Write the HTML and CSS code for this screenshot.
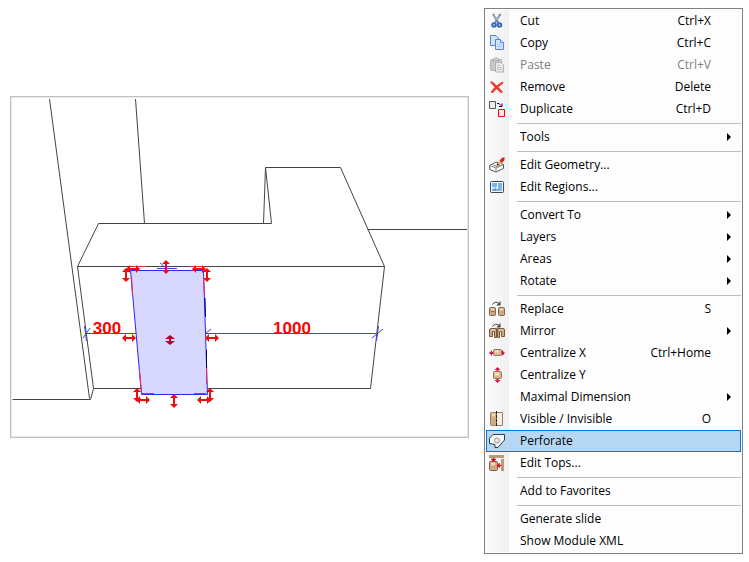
FILE: index.html
```html
<!DOCTYPE html>
<html lang="en">
<head>
    <meta charset="UTF-8">
    <meta name="viewport" content="width=device-width, initial-scale=1.0">
    <title>Module context menu</title>
    <link rel="stylesheet" href="styles.css">
</head>
<body>
    <main class="viewer">
        <svg class="scene" viewBox="11 97 457 340" role="img" aria-label="Module with dimensions">
            <defs>
                <path id="move-x" d="M-7 0L-3 -4V-1H3V-4L7 0L3 4V1H-3V4Z"/>
                <path id="move-y" d="M0 -7L-4 -3H-1V3H-4L0 7L4 3H1V-3H4Z"/>
            </defs>

            <!-- walls and floor -->
            <g class="edges">
                <path d="M49.500 99L89.500 398.500M135.500 99L144.500 223.500M367.500 229.500H467M12.500 399.500H90.500L93.500 388.500L77.500 266.500"/>
                <path d="M77.500 266.500L98.500 223.500H271.500L265.500 167.500H340.500L384.500 266.500H77.500M263.500 223.500L265.500 167.500"/>
                <path d="M93.500 388.500H370.500"/>
                <path d="M384.500 266.500L370.500 388.500"/>
            </g>

            <!-- selected front -->
            <path class="front" d="M130.500 270.500H203.500L207.500 394.500H141.500Z"/>
            <path class="front-shade" d="M205 298L205.500 317M206.500 350V368"/>
            <path class="front-marks" d="M132 266.500H146M189 266.500H204M131.500 276L132.500 296M139.500 371L141.500 392M203.500 278L204.500 296M206.500 368V384M142 393.500H154M194 393.500H206"/>

            <!-- dimensions -->
            <g class="dims">
                <path d="M85 333.500H136M206 333.500H377"/>
                <path d="M84.500 326L86.500 341M83 338L90 328M205 334L211 329M372 338L383 329M378.500 326L376.500 341M157 268.500H177M160 263L166 268"/>
            </g>
            <text class="dim-text" x="107" y="334">300</text>
            <text class="dim-text" x="292" y="334">1000</text>

            <g class="handles">
                <use href="#move-y" x="126" y="275"/>
                <use href="#move-x" x="133" y="269"/>
                <use href="#move-y" x="166" y="267"/>
                <use href="#move-x" x="199" y="269"/>
                <use href="#move-y" x="207" y="275"/>
                <use href="#move-x" x="129" y="338"/>
                <use href="#move-x" x="212" y="338"/>
                <use href="#move-y" x="137" y="395"/>
                <use href="#move-x" x="143" y="400"/>
                <use href="#move-y" x="174" y="401"/>
                <use href="#move-x" x="204" y="400"/>
                <use href="#move-y" x="210" y="395"/>
            </g>
            <path class="handle-center" d="M170 335L165 339H169V341H165L170 345L175 341H171V339H175Z"/>
        </svg>
    </main>

    <nav class="menu" aria-label="Module">
        <button type="button" class="item">
            <svg class="icon" viewBox="0 0 16 16"><path d="M4 1L9.500 10M11.500 1L6 10" stroke="#7286a8" stroke-width="2" fill="none"/><path d="M5 2L8 7M11 3L8 7" stroke="#b3c4dc" fill="none"/><g fill="none" stroke="#3b68b8" stroke-width="2"><circle cx="5" cy="12" r="1.800"/><circle cx="10.500" cy="12" r="1.800"/></g></svg>
            <span class="label">Cut</span><span class="key">Ctrl+X</span>
        </button>
        <button type="button" class="item">
            <svg class="icon" viewBox="0 0 16 16"><g fill="#cfe2ff" stroke="#5b83cf"><path d="M1.500 .5H7L9.500 3V10.500H1.500Z"/><path d="M6.500 4.500H11.500L14.500 7.500V14.500H6.500Z"/></g><path d="M11.500 4.500V7.500H14.500" fill="#fff" stroke="#5b83cf"/><path d="M8 9.500H13M8 11.500H13" stroke="#a9c8f5"/></svg>
            <span class="label">Copy</span><span class="key">Ctrl+C</span>
        </button>
        <button type="button" class="item" disabled>
            <svg class="icon" viewBox="0 0 16 16"><rect x="1.500" y="2.500" width="11" height="11" rx="1" fill="#c8c8c8" stroke="#b4b4b4"/><path d="M4 3.500V2H5.500L6 1H8L8.500 2H10V3.500Z" fill="#e0e0e0" stroke="#a9a9a9"/><path d="M6.500 5.500H12L14.500 8V15H6.500Z" fill="#ececec" stroke="#b0b0b0"/><path d="M8 8.500H11M8 10.500H13M8 12.500H13" stroke="#c0c0c0"/></svg>
            <span class="label">Paste</span><span class="key">Ctrl+V</span>
        </button>
        <button type="button" class="item">
            <svg class="icon" viewBox="0 0 16 16"><path d="M1.500 3L3.500 3Q8 7 13.500 13L12 13.500Q6 9 1.500 3ZM13.500 3L14 4Q7 9 4 13.500L2 13Q6 7 13.500 3Z" fill="#fa3732" stroke="#ed3a35"/></svg>
            <span class="label">Remove</span><span class="key">Delete</span>
        </button>
        <button type="button" class="item">
            <svg class="icon" viewBox="0 0 16 16"><path d="M.5 .5H6.500V7.500H.5Z" fill="#ececec" stroke="#555"/><path d="M9.500 8.500H15.500V15.500H9.500Z" fill="#ececec" stroke="#f00"/><path d="M8 2.500H10L12 4.500M10 5.500H13V2.500" fill="none" stroke="#000064"/></svg>
            <span class="label">Duplicate</span><span class="key">Ctrl+D</span>
        </button>
        <hr class="separator">
        <button type="button" class="item submenu" aria-haspopup="true">
            <span class="label">Tools</span>
        </button>
        <hr class="separator">
        <button type="button" class="item">
            <svg class="icon" viewBox="0 0 16 16"><path d="M.7 8.500L7 5L14.500 7.500V11.500L7 15L.7 12.500Z" fill="#fafafa" stroke="#555"/><path d="M.7 8.500L7 11L14.500 7.500M7 11V15" fill="none" stroke="#888"/><path d="M4.500 8L8 9.500L11 8" fill="none" stroke="#777"/><path d="M8.500 7L10.500 3.500L13 6L10.500 8Z" fill="#f0b568"/><path d="M10.500 3.500L13 1L15.500 0V3L13 6Z" fill="#c72720"/><path d="M7.500 8.500L8.500 6L10 8Z" fill="#222"/></svg>
            <span class="label">Edit Geometry...</span>
        </button>
        <button type="button" class="item">
            <svg class="icon" viewBox="0 0 16 16"><rect x="1.500" y="2.500" width="13" height="11" rx="1" fill="#f3f9fd" stroke="#34495b"/><path d="M3 4H8V8H3ZM9 4H13V12H9ZM3 10H13V12H3Z" fill="#79b6e3"/><path d="M6 8V11M4 9.500L6 11.500L8 9.500" fill="none" stroke="#4c91c4"/></svg>
            <span class="label">Edit Regions...</span>
        </button>
        <hr class="separator">
        <button type="button" class="item submenu" aria-haspopup="true">
            <span class="label">Convert To</span>
        </button>
        <button type="button" class="item submenu" aria-haspopup="true">
            <span class="label">Layers</span>
        </button>
        <button type="button" class="item submenu" aria-haspopup="true">
            <span class="label">Areas</span>
        </button>
        <button type="button" class="item submenu" aria-haspopup="true">
            <span class="label">Rotate</span>
        </button>
        <hr class="separator">
        <button type="button" class="item">
            <svg class="icon" viewBox="0 0 16 16"><g fill="#cda982" stroke="#82664a"><rect x=".5" y="6.500" width="6" height="8" rx="1"/><rect x="9.500" y="6.500" width="6" height="8" rx="1"/></g><path d="M2 8.500H5M11 8.500H14" stroke="#f0dcc3" stroke-width="2"/><path d="M2 10.500H5" stroke="#82664a"/><path d="M3.500 3.500Q6 -.5 10 2.500" fill="none" stroke="#444"/><path d="M11.500 0V4.500H7.500Z" fill="#444"/></svg>
            <span class="label">Replace</span><span class="key">S</span>
        </button>
        <button type="button" class="item submenu" aria-haspopup="true">
            <svg class="icon" viewBox="0 0 16 16"><g fill="#cda982" stroke="#76593c"><path d="M.5 7Q.5 5.500 2 5.500H7.500V14.500H5.500V8.500H3.500V13.500H.5Z"/><path d="M8.500 5.500H14Q15.500 5.500 15.500 7V13.500H12.500V8.500H10.500V14.500H8.500Z"/></g><path d="M2 7H6M10 7H14" stroke="#edd7b9"/><path d="M3.500 3.500Q6 -.5 10 2.500" fill="none" stroke="#444"/><path d="M11.500 0V4.500H7.500Z" fill="#444"/></svg>
            <span class="label">Mirror</span>
        </button>
        <button type="button" class="item">
            <svg class="icon" viewBox="0 0 16 16"><path d="M0 8L3 5V7H13V5L16 8L13 11V9H3V11Z" fill="#e1144b"/><rect x="4.500" y="4.500" width="8" height="6" rx="1" fill="#d8b992" stroke="#927355"/><path d="M6 6.500H10" stroke="#f3e2cb" stroke-width="2"/></svg>
            <span class="label">Centralize X</span><span class="key">Ctrl+Home</span>
        </button>
        <button type="button" class="item">
            <svg class="icon" viewBox="0 0 16 16"><path d="M8.500 0L11.500 3H9.500V13H11.500L8.500 16L5.500 13H7.500V3H5.500Z" fill="#e1144b"/><rect x="4.500" y="4.500" width="8" height="7" rx="1" fill="#d8b992" stroke="#927355"/><path d="M6 7H10" stroke="#f3e2cb" stroke-width="3"/></svg>
            <span class="label">Centralize Y</span>
        </button>
        <button type="button" class="item submenu" aria-haspopup="true">
            <span class="label">Maximal Dimension</span>
        </button>
        <button type="button" class="item">
            <svg class="icon" viewBox="0 0 16 16"><rect x="1.500" y="1.500" width="6" height="13" rx="1" fill="#d1ae88" stroke="#9e7d5d"/><path d="M3 4H6" stroke="#eedac0" stroke-width="3"/><path d="M8 1.500H13.500V14.500H8" fill="#f7eddd" stroke="#9e7d5d"/><path d="M7.500 0V16" stroke="#222" stroke-dasharray="3 1"/></svg>
            <span class="label">Visible / Invisible</span><span class="key">O</span>
        </button>
        <button type="button" class="item selected">
            <svg class="icon" viewBox="0 0 16 16"><path d="M4 1.500H15.500V7L9 14.500H6V11.500L.5 10.500V5Z" fill="#f6f6f6" stroke="#373c42"/><circle cx="8" cy="7.500" r="2.500" fill="#e8e8e8" stroke="#999"/></svg>
            <span class="label">Perforate</span>
        </button>
        <button type="button" class="item">
            <svg class="icon" viewBox="0 0 16 16"><path d="M0 0H15V3H0ZM12 4H15V16H12Z" fill="#b99b79"/><rect x=".5" y="6.500" width="8" height="9" rx="1" fill="#cda982" stroke="#806247"/><path d="M2 9H6" stroke="#ecd7bd" stroke-width="3"/><path d="M2 4H7L4.500 7ZM4 3H5V5H4ZM8 10.500L10.500 8V10H12V11H10.500V13Z" fill="#cf111c" stroke="#cf111c" stroke-width=".5"/></svg>
            <span class="label">Edit Tops...</span>
        </button>
        <hr class="separator">
        <button type="button" class="item">
            <span class="label">Add to Favorites</span>
        </button>
        <hr class="separator">
        <button type="button" class="item">
            <span class="label">Generate slide</span>
        </button>
        <button type="button" class="item">
            <span class="label">Show Module XML</span>
        </button>
    </nav>
</body>
</html>
```
FILE: styles.css
```css
* {
    margin: 0;
    padding: 0;
    box-sizing: border-box;
}

body {
    font-family: 'Segoe UI', 'Open Sans', 'Noto Sans', sans-serif;
    font-size: 12px;
    color: #000;
    background: #fff;
    display: flex;
    align-items: flex-start;
    gap: 15px;
    padding: 8px 6px 8px 10px;
}

.viewer {
    flex: 1;
    min-width: 0;
    margin-top: 88px;
    border: 1px solid #c0c0c0;
    box-shadow: inset 0 0 0 1px #e8e8e8;
}

.scene {
    display: block;
    width: 100%;
    height: auto;
}

.edges {
    fill: none;
    stroke: #444;
}

.front {
    fill: #d8d8ff;
    stroke: #2828ff;
}

.front-shade {
    stroke: #000050;
}

.front-marks {
    fill: none;
    stroke: #f02850;
}

.dims {
    fill: none;
    stroke: #4040f0;
}

.dim-text {
    font-family: 'Liberation Sans', Arial, sans-serif;
    font-size: 17px;
    font-weight: bold;
    text-anchor: middle;
    fill: #f00;
}

.handles {
    fill: #f00c0c;
}

.handle-center {
    fill: #b5002d;
}

.menu {
    flex: none;
    width: 259px;
    padding: 1px;
    border: 1px solid #808080;
    background: linear-gradient(to right, #fcfcfc, #f0f0f0) 1px 1px / 23px calc(100% - 2px) no-repeat #fdfdfd;
}

.item {
    display: grid;
    grid-template-columns: 30px 1fr auto 26px;
    align-items: center;
    width: 100%;
    height: 22px;
    padding: 0 3px 0 2px;
    border: 1px solid transparent;
    background: none;
    font: inherit;
    line-height: 16px;
    color: inherit;
    text-align: left;
}

.item:disabled {
    color: #808080;
}

.item:hover:enabled,
.item.selected {
    background: #b5d7f3;
    border-color: #0078d7;
}

.icon {
    grid-column: 1;
    width: 16px;
    height: 16px;
}

.label {
    grid-column: 2;
    padding-left: 1px;
}

.key {
    grid-column: 3;
}

/* submenu arrow */
.submenu::after {
    content: '';
    grid-column: 4;
    justify-self: end;
    margin-right: 6px;
    border: 4px solid transparent;
    border-left-color: #000;
    border-right-width: 0;
}

.separator {
    height: 1px;
    margin: 3px 0 2px 31px;
    border: 0;
    background: #bdbdbd;
}
```
